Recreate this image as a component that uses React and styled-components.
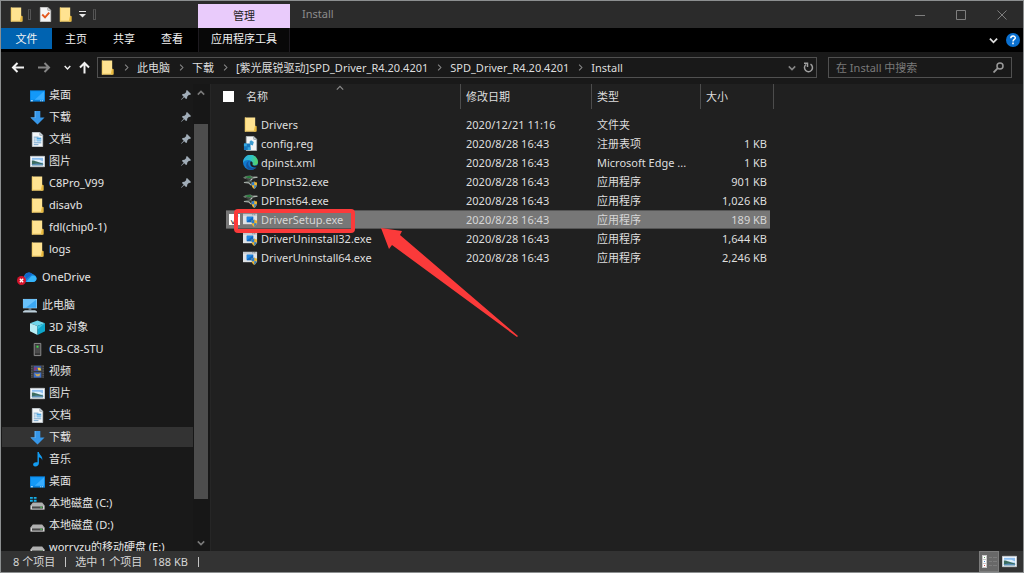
import React, { useState } from "react";
import styled, { createGlobalStyle } from "styled-components";

const GlobalStyle = createGlobalStyle`
  * {
    box-sizing: border-box;
  }
  body {
    margin: 0;
    background: #202020;
    color: #dedede;
    font-family: "Noto Sans", "Noto Sans CJK SC", sans-serif;
    font-size: 11px;
    line-height: 16px;
  }
  button, input {
    font: inherit;
    color: inherit;
    padding: 0;
    border: 0;
    background: none;
  }
  svg {
    display: block;
    flex: none;
  }
`

const Window = styled.div`
  display: flex;
  flex-direction: column;
  height: 100vh;
  border: 1px solid #8c8f90;
`
const TitleBar = styled.header`
  display: flex;
  flex: none;
  height: 27px;
  padding-right: 1px;
  background: #2b2b2b;
`
const QuickAccess = styled.div`
  display: flex;
  align-items: center;
  width: 197px;
  padding-left: 8px;
`
const QuickButton = styled.button`
  display: flex;
  align-items: center;
  justify-content: center;
  width: ${(props) => props.$width || 20}px;
  height: 20px;
`
const Divider = styled.span`
  width: 3px;
  height: 11px;
  margin: 0 5px;
  border: 1px solid #555;
  border-top-color: #444;
`
const ToolGroup = styled.div`
  width: 92px;
  margin-top: 3px;
  background: #e9cbfb;
  color: #222;
  text-align: center;
  line-height: 23px;
`
const Title = styled.h1`
  flex: 1;
  margin: 0;
  padding-left: 12px;
  color: #8c8c8c;
  font-size: 11px;
  font-weight: 400;
  line-height: 26px;
`
const WindowButton = styled.button`
  display: flex;
  align-items: center;
  justify-content: center;
  width: 41px;
  color: #7e7e7e;
`
const Ribbon = styled.nav`
  display: flex;
  flex: none;
  height: 24px;
  background: #000;
`
const Tab = styled.button`
  width: ${(props) => props.$width || 48}px;
  height: ${(props) => (props.$file ? 21 : 24)}px;
  padding-bottom: ${(props) => (props.$file ? 0 : 2)}px;
  margin-left: ${(props) => (props.$tools ? 2 : 0)}px;
  background: ${(props) => (props.$file ? "#0063b1" : props.$tools ? "#080808" : "transparent")};
  border-left: ${(props) => (props.$tools ? "1px solid #1d1a1f" : "0")};
  border-right: ${(props) => (props.$tools ? "1px solid #1d1a1f" : "0")};
  color: #f2f2f2;
`
const RibbonEnd = styled.div`
  display: flex;
  align-items: center;
  gap: 8px;
  margin-left: auto;
  padding-right: 3px;
`
const NavBar = styled.div`
  display: flex;
  flex: none;
  align-items: center;
  height: 32px;
  padding: 0 11px 1px 7px;
  background: #191919;
`
const NavButton = styled.button`
  display: flex;
  align-items: center;
  justify-content: center;
  width: ${(props) => props.$width}px;
  height: 20px;
  color: ${(props) => (props.$dim ? "#858585" : "#f2f2f2")};
`
const AddressBar = styled.div`
  display: flex;
  flex: 1;
  align-items: center;
  height: 21px;
  margin-right: 11px;
  padding-left: 2px;
  border: 1px solid #505050;
  white-space: nowrap;
`
const Crumb = styled.span`
  display: flex;
  align-items: center;
`
const CrumbArrow = styled.span`
  display: flex;
  justify-content: center;
  width: 22px;
  color: #8a8a8a;
`
const AddressEnd = styled.div`
  display: flex;
  margin-left: auto;
`
const SearchBox = styled.label`
  display: flex;
  align-items: center;
  width: 18%;
  min-width: 184px;
  height: 21px;
  padding: 0 7px;
  border: 1px solid #505050;
  color: #9a9a9a;
`
const SearchInput = styled.input`
  flex: 1;
  min-width: 0;
  outline: 0;
  &::placeholder {
    color: #7a7a7a;
    opacity: 1;
  }
`
const Body = styled.div`
  display: flex;
  flex: 1;
  min-height: 0;
`
const Sidebar = styled.aside`
  display: flex;
  flex: none;
  width: 210px;
  background: #191919;
  border-right: 1px solid #262626;
`
const Tree = styled.div`
  display: flex;
  flex: 1;
  flex-direction: column;
  gap: 8px;
  padding: 1px 0 0 1px;
  overflow: hidden;
`
const TreeGroup = styled.div`
  display: flex;
  flex-direction: column;
  flex: none;
  gap: 2px;
`
const TreeItem = styled.button`
  display: flex;
  flex: none;
  align-items: center;
  gap: ${(props) => (props.$root ? 5 : 4)}px;
  height: 20px;
  padding: 0 2px 0 ${(props) => (props.$root ? 20 : 28)}px;
  background: ${(props) => (props.$active ? "#333" : "transparent")};
  color: #e6e6e6;
  white-space: nowrap;
  text-align: left;
  &:hover {
    background: #2b2b2b;
  }
`
const PinSlot = styled.span`
  margin-left: auto;
`
const ScrollBar = styled.div`
  display: flex;
  flex-direction: column;
  width: 17px;
  padding: 0 2px 0 1px;
  background: #171717;
`
const ScrollButton = styled.button`
  display: flex;
  align-items: center;
  justify-content: center;
  height: 17px;
  color: #7a7a7a;
`
const ScrollTrack = styled.div`
  display: flex;
  flex: 1;
  flex-direction: column;
  &::before {
    content: "";
    flex: 23;
  }
  &::after {
    content: "";
    flex: 35;
  }
`
const Thumb = styled.div`
  flex: 376;
  background: #4d4d4d;
`
const Content = styled.main`
  position: relative;
  flex: 1;
  min-width: 0;
  padding-left: 11px;
  background: #202020;
`
const FileTable = styled.table`
  width: 552px;
  table-layout: fixed;
  border-collapse: separate;
  border-spacing: 0;
`
const Col = styled.col`
  width: ${(props) => props.$width}px;
`
const Th = styled.th`
  position: relative;
  height: 25px;
  padding: 0 0 0 5px;
  border-right: 1px solid #4c4c4c;
  font-weight: 400;
  text-align: left;
  color: #dedede;
  &:first-child {
    padding-left: 1px;
  }
`
const SortMark = styled.span`
  position: absolute;
  top: 0;
  left: 48%;
  color: #8a8a8a;
`
const Spacer = styled.tr`
  height: 6px;
`
const Row = styled.tr`
  height: 19px;
  color: ${(props) => (props.$selected ? "#d6d6d6" : "#dedede")};
`
const Td = styled.td`
  height: 19px;
  padding: 0 0 0 5px;
  overflow: hidden;
  white-space: nowrap;
  text-overflow: ellipsis;
  text-align: ${(props) => (props.$right ? "right" : "left")};
  background: ${(props) => (props.$selected ? "#777" : "transparent")};
  background-clip: padding-box;
  box-shadow: ${(props) => (props.$selected ? "inset 0 1px #555, inset 0 -1px #555" : "none")};
  &:first-child {
    border-left: 4px solid transparent;
    padding-left: 3px;
  }
  &:nth-child(3) {
    padding-right: 8px;
  }
  &:last-child {
    border-right: 4px solid transparent;
    padding-right: 3px;
  }
`
const NameCell = styled.div`
  display: flex;
  align-items: center;
  gap: 3px;
`
const HeadCell = styled.div`
  display: flex;
  align-items: center;
  gap: 12px;
`
const Check = styled.input.attrs({ type: "checkbox" })`
  appearance: none;
  flex: none;
  width: 11px;
  height: 11px;
  margin: 0;
  background: #fff;
  color: #222;
  opacity: ${(props) => (props.$hidden ? 0 : 1)};
  &:checked::before {
    content: "✓";
    display: block;
    font-size: 11px;
    line-height: 11px;
    text-align: center;
  }
`
const FileName = styled.span`
  display: flex;
  align-items: center;
  gap: 3px;
`
const Annotation = styled.svg`
  position: absolute;
  top: 0;
  left: 0;
  pointer-events: none;
`
const StatusBar = styled.footer`
  display: flex;
  flex: none;
  align-items: center;
  height: 21px;
  padding: 0 4px 0 12px;
  background: #333;
  color: #d6d6d6;
`
const StatusText = styled.span`
  margin-right: 10px;
`
const StatusLine = styled.span`
  width: 1px;
  height: 10px;
  margin-right: 9px;
  background: #c4c4c4;
`
const ViewButtons = styled.div`
  display: flex;
  align-self: stretch;
  margin-left: auto;
`
const ViewButton = styled.button`
  display: flex;
  align-items: center;
  justify-content: center;
  width: 20px;
  background: ${(props) => (props.$active ? "#686868" : "transparent")};
  border: 1px solid ${(props) => (props.$active ? "#7c7c7c" : "transparent")};
`

const Svg = ({ w = 15, h = 15, box = "0 0 16 16", children }) => (
  <svg width={w} height={h} viewBox={box} fill="none" aria-hidden="true">
    {children}
  </svg>
);

const Chevron = ({ dir = "down", size = 8, weight = 2 }) => {
  const paths = {
    down: "M1 3 L5 7 L9 3",
    up: "M1 7 L5 3 L9 7",
    right: "M3 1 L7 5 L3 9",
  };
  return (
    <Svg w={size} h={size} box="0 0 10 10">
      <path d={paths[dir]} stroke="currentColor" strokeWidth={weight} />
    </Svg>
  );
};

const FolderIcon = () => (
  <Svg>
    <path d="M2 .5h11v9l1 1v5H2z" fill="#ffe391" />
    <path d="M2 .5h1v15H2z" fill="#f5d06b" />
    <path d="M12.500 10.500l1-1.500 1 1v5.500h-3z" fill="#e9b93d" />
    <path d="M2 14.500h11v1H2z" fill="#edc75f" />
  </Svg>
);

const DesktopIcon = () => (
  <Svg>
    <path d="M0 2.500h16v12H0z" fill="#0a84e0" />
    <path d="M1 3.500h14v9H1z" fill="#1399f8" />
    <path d="M15 3.500v9H5z" fill="#39adff" />
    <path d="M1 13h2v1H1zM11 13h1v1h-1zM13 13h1v1h-1z" fill="#d9f0ff" />
  </Svg>
);

const DownloadIcon = () => (
  <Svg>
    <path d="M5 1h6v7h4.500L8 15.500.5 8H5z" fill="#3696e8" />
    <path d="M5 1h1v7.500H1.500L8 15 .5 8H5z" fill="#63b3f4" />
  </Svg>
);

const DocumentIcon = () => (
  <Svg>
    <path d="M2.500 .5h8l3 3v12h-11z" fill="#f3f6f8" stroke="#c3cbd0" />
    <path d="M10.500 .5v3h3" fill="#d8e1e7" stroke="#9ca8b0" />
    <path d="M4 5.500h5M4 7.500h2M4 9.500h2M4 11.500h8M4 13.500h5" stroke="#6b9fc9" />
    <path d="M7 6h5v4H7z" fill="#4ca3e0" />
    <path d="M7 8h5v1H7z" fill="#d5ecfa" />
  </Svg>
);

const PictureIcon = () => (
  <Svg>
    <path d="M.5 2.500h15v11H.5z" fill="#fff" stroke="#c6cdd2" />
    <path d="M2 4h12v8H2z" fill="#8dbff0" />
    <path d="M2 6h8l4 2v1H2z" fill="#e2f1fa" />
    <path d="M2 7c4 0 6 2 12 3v2H2z" fill="#3c6d60" />
    <path d="M2 11l5-1 7 1v1H2z" fill="#5b8fb8" />
  </Svg>
);

const PinIcon = () => (
  <Svg w={10} h={10} box="0 0 10 10">
    <path d="M6 0l4 4-1 1-1-.3L6.300 6.500 6 8.500 5 9 3.200 7.200.5 9.800 0 9.500 2.700 6.700 1 5l.6-1L3.500 3.800 5.300 2 5 1z" fill="#a1adb8" />
  </Svg>
);

const OneDriveIcon = () => (
  <Svg w={20} h={15} box="0 0 20 15">
    <path d="M7 8a5 5 0 0 1 8.500-4c2.500.5 4 2.500 4 4.500s-1.500 3.500-3.500 3.500H8z" fill="#1686dc" />
    <path d="M8 5a4.500 4.500 0 0 1 7.500-1L9 9z" fill="#1266c8" />
    <path d="M9 12l5.500-6c3-1 5 .5 5 2.500s-1.500 3.500-3.500 3.500z" fill="#35b5fa" />
    <circle cx="4.500" cy="10.500" r="4.500" fill="#d3142c" />
    <path d="M2.800 8.800l3.400 3.400M6.200 8.800l-3.400 3.400" stroke="#fff" strokeWidth="1.300" />
  </Svg>
);

const ComputerIcon = () => (
  <Svg>
    <path d="M1 1h15v10H1z" fill="#b5dcf3" />
    <path d="M1.500 1.500h14v9h-14z" fill="#3ba7f2" />
    <path d="M1.500 1.500h14L4 10.500H1.500z" fill="#69c2fb" />
    <path d="M7 11h3v1.500H7z" fill="#8299a8" />
    <path d="M3 13h11l2 1.500v1H1v-1z" fill="#bdd0dc" />
  </Svg>
);

const CubeIcon = () => (
  <Svg>
    <path d="M8 .5l8 3L8 6.500 0 3.500z" fill="#6fd6ea" />
    <path d="M0 3.500L8 6.500V16L0 12z" fill="#b8eef5" />
    <path d="M16 3.500L8 6.500V16l8-4z" fill="#0ea6cb" />
    <path d="M16 3.500L8 10V6.500z" fill="#3bc4e0" />
  </Svg>
);

const DeviceIcon = () => (
  <Svg>
    <path d="M4.500 1.500h7v13h-7z" fill="#343434" stroke="#929292" />
    <path d="M5.500 3h5v9h-5z" fill="#4b4b4b" />
    <path d="M7 4h2v2H7z" fill="#3fe04a" />
  </Svg>
);

const VideoIcon = () => (
  <Svg>
    <path d="M1 1h14v14H1z" fill="#3a3a3a" />
    <path d="M2 2v13M14 2v13" stroke="#777" strokeDasharray="1 1.500" />
    <path d="M4 2h8v5.500H4z" fill="#385ea9" />
    <path d="M4 9h8v5.500H4z" fill="#3f6fc8" />
    <path d="M5 3l3 1-2 3H4z" fill="#8d3a78" />
    <path d="M8 4h3l1 3H9z" fill="#efc435" />
    <path d="M5 10l3 1 3-1-1 3H7z" fill="#c9a75a" />
  </Svg>
);

const MusicIcon = () => (
  <Svg>
    <path d="M8 0h1.500c0 3 4.500 4 3.500 9-.3-2-1.500-3-3.500-3.500V12c0 2-1.500 3.500-4 3.500-3 0-3-4.500 1-4.500H8z" fill="#139cf2" />
  </Svg>
);

const DriveIcon = ({ system }) => (
  <Svg>
    <path d="M3 7h10l2.500 3H.5z" fill="#b0b0b0" />
    <path d="M.5 10h15v4.500H.5z" fill="#e2e2e2" />
    <path d="M2 11h12v2.500H2z" fill="#4a4a4a" />
    <path d="M11 11.500h2v1h-2z" fill="#48e254" />
    {system && <path d="M0 1h3v2H0zM4 1h3v2H4zM0 4h3v2H0zM4 4h3v2H4z" fill="#16aee8" />}
  </Svg>
);

const RegIcon = () => (
  <Svg>
    <path d="M3.500 .5h8l3 3v12h-11z" fill="#f4f4f4" stroke="#b0b6ba" />
    <path d="M11.500 .5v3h3" stroke="#8e979d" />
    <path d="M1 8h7v7H1z" fill="#1778bd" />
    <path d="M1 8h3v3H1zM5 12h3v3H5z" fill="#35a8e0" />
    <path d="M8.500 4.500l3 2-1 3.500-3-1-.5-3z" fill="#3c9bd0" />
  </Svg>
);

const EdgeIcon = () => (
  <Svg>
    <defs>
      <linearGradient id="edgeTop" x1="0" y1="4" x2="16" y2="8" gradientUnits="userSpaceOnUse">
        <stop stopColor="#2fa9e0" />
        <stop offset=".5" stopColor="#2fc3c5" />
        <stop offset="1" stopColor="#5bd55a" />
      </linearGradient>
    </defs>
    <circle cx="8" cy="8" r="8" fill="#1078cf" />
    <path d="M0 8a8 8 0 0 1 16-.5c0 3-2.500 4-5 3.500-1.500-.3-1-1-.8-2C10.500 5 3 3.500 0 8z" fill="url(#edgeTop)" />
    <path d="M5.500 9c0 4 4.500 6 9 4-4 5-12 3-11-3 .3-2 2-3.500 4-3.500C6.500 7 5.500 8 5.500 9z" fill="#1455a0" />
    <path d="M8 7c2 0 2.500 1 2.200 2.500-.4 2 2.800 2.700 5.800 1-.3 1-.8 1.700-1.500 2.500-4 1-8-1-6.500-6z" fill="#202020" />
  </Svg>
);

const Shield = () => (
  <>
    <path d="M9 9c1.200 0 2.300-.4 3-1 .7.600 1.800 1 3 1 0 3.500-.8 5.500-3 7-2.200-1.500-3-3.500-3-7z" fill="#f0b62e" />
    <path d="M9 9c1.200 0 2.300-.4 3-1v4H9.400zM12 12h2.600c-.4 1.700-1.200 3-2.600 4z" fill="#2b7dd0" />
  </>
);

const DpInstIcon = () => (
  <Svg>
    <path d="M0 4l3-2 5-.5 3 1.500h4v1l-4 1-5 1-4-1z" fill="#6f7a72" />
    <path d="M2 3l5-1 3 1.500-4 1z" fill="#23803b" />
    <path d="M3 5l4 .500 3-.5" stroke="#2b332d" />
    <path d="M11 3.500h4.500M10 5l-3 3" stroke="#c3c9c5" strokeWidth="1.200" />
    <path d="M1 8.500l6-2 3 1.500-4 1.500z" fill="#4f5952" />
    <path d="M1 9l5 .500 3 2.500" stroke="#a9b1ac" strokeWidth="1.200" />
    <Shield />
  </Svg>
);

const SetupIcon = () => (
  <Svg>
    <path d="M0 2h15v11H0z" fill="#dfe3e6" />
    <path d="M0 2h15v2H0z" fill="#c4cacf" />
    <path d="M10 2.500h1v1h-1zM12 2.500h1v1h-1z" fill="#717a82" />
    <path d="M4 5h7v6H4z" fill="#1268c0" />
    <path d="M4 5h7l-7 5z" fill="#2088e2" />
    <Shield />
  </Svg>
);

const TaskIcon = () => (
  <Svg>
    <path d="M2.500 .5h8l3 3v12h-11z" fill="#f5f5f5" stroke="#c9c9c9" />
    <path d="M10.500 .5v3h3" stroke="#999" />
    <path d="M4.500 8l3 3 4.500-5" stroke="#e2571e" strokeWidth="2" />
  </Svg>
);

const Arrow = ({ dir }) => (
  <Svg w={13} h={13} box="0 0 13 13">
    <path
      d={{
        left: "M13 6.500H2M6.500 2L2 6.500 6.500 11",
        right: "M0 6.500h11M6.500 2L11 6.500 6.500 11",
        up: "M6.500 12.500V2M2 6.500L6.500 2 11 6.500",
      }[dir]}
      stroke="currentColor"
      strokeWidth="2"
    />
  </Svg>
);

const DetailsIcon = () => (
  <Svg w={15} h={13} box="0 0 15 13">
    <path d="M0 0h5v13H0z" fill="#c8c8c8" />
    <path d="M1 1h3v3H1zM1 5h3v3H1zM1 9h3v3H1z" fill="#fff" />
    <path d="M2 2h1v1H2z" fill="#5b9e5b" />
    <path d="M2 6h1v1H2z" fill="#4d8fd6" />
    <path d="M2 10h1v1H2z" fill="#d64d4d" />
    <path d="M7 2.500h3M11 2.500h4M7 6.500h3M11 6.500h4M7 10.500h3M11 10.500h4" stroke="#7c7c7c" />
  </Svg>
);

const quickItems = [
  { name: "桌面", icon: DesktopIcon, pinned: true },
  { name: "下载", icon: DownloadIcon, pinned: true },
  { name: "文档", icon: DocumentIcon, pinned: true },
  { name: "图片", icon: PictureIcon, pinned: true },
  { name: "C8Pro_V99", icon: FolderIcon, pinned: true },
  { name: "disavb", icon: FolderIcon },
  { name: "fdl(chip0-1)", icon: FolderIcon },
  { name: "logs", icon: FolderIcon },
];

const computerItems = [
  { name: "此电脑", icon: ComputerIcon, root: true },
  { name: "3D 对象", icon: CubeIcon },
  { name: "CB-C8-STU", icon: DeviceIcon },
  { name: "视频", icon: VideoIcon },
  { name: "图片", icon: PictureIcon },
  { name: "文档", icon: DocumentIcon },
  { name: "下载", icon: DownloadIcon, active: true },
  { name: "音乐", icon: MusicIcon },
  { name: "桌面", icon: DesktopIcon },
  { name: "本地磁盘 (C:)", icon: DriveIcon, system: true },
  { name: "本地磁盘 (D:)", icon: DriveIcon },
  { name: "worryzu的移动硬盘 (E:)", icon: DriveIcon },
];

const files = [
  { name: "Drivers", date: "2020/12/21 11:16", type: "文件夹", size: "", icon: FolderIcon },
  { name: "config.reg", date: "2020/8/28 16:43", type: "注册表项", size: "1 KB", icon: RegIcon },
  { name: "dpinst.xml", date: "2020/8/28 16:43", type: "Microsoft Edge ...", size: "1 KB", icon: EdgeIcon },
  { name: "DPInst32.exe", date: "2020/8/28 16:43", type: "应用程序", size: "901 KB", icon: DpInstIcon },
  { name: "DPInst64.exe", date: "2020/8/28 16:43", type: "应用程序", size: "1,026 KB", icon: DpInstIcon },
  { name: "DriverSetup.exe", date: "2020/8/28 16:43", type: "应用程序", size: "189 KB", icon: SetupIcon },
  { name: "DriverUninstall32.exe", date: "2020/8/28 16:43", type: "应用程序", size: "1,644 KB", icon: SetupIcon },
  { name: "DriverUninstall64.exe", date: "2020/8/28 16:43", type: "应用程序", size: "2,246 KB", icon: SetupIcon },
];

const crumbs = ["此电脑", "下载", "[紫光展锐驱动]SPD_Driver_R4.20.4201", "SPD_Driver_R4.20.4201", "Install"];

const TreeList = ({ items }) => (
  <TreeGroup>
    {items.map(({ name, icon: Icon, pinned, active, root, system }) => (
      <TreeItem key={name} $active={active} $root={root}>
        <Icon system={system} />
        {name}
        {pinned && <PinSlot><PinIcon /></PinSlot>}
      </TreeItem>
    ))}
  </TreeGroup>
);

const OneDriveItem = styled(TreeItem)`
  gap: 5px;
  padding-left: 15px;
`

const App = () => {
  const [selected, setSelected] = useState("DriverSetup.exe");
  const [query, setQuery] = useState("");

  return (
    <Window>
      <GlobalStyle />
      <TitleBar>
        <QuickAccess>
          <QuickButton $width={14} aria-label="Explorer"><FolderIcon /></QuickButton>
          <Divider />
          <QuickButton $width={18} aria-label="属性"><TaskIcon /></QuickButton>
          <QuickButton $width={22} aria-label="新建文件夹"><FolderIcon /></QuickButton>
          <QuickButton $width={12} aria-label="自定义">
            <Svg w={7} h={7} box="0 0 7 7">
              <path d="M0 .5h7" stroke="#e8e8e8" />
              <path d="M0 3h7L3.500 6.500z" fill="#e8e8e8" />
            </Svg>
          </QuickButton>
          <Divider />
        </QuickAccess>
        <ToolGroup>管理</ToolGroup>
        <Title>Install</Title>
        <WindowButton aria-label="最小化">
          <Svg w={10} h={10} box="0 0 10 10"><path d="M0 5.500h10" stroke="currentColor" /></Svg>
        </WindowButton>
        <WindowButton aria-label="最大化">
          <Svg w={10} h={10} box="0 0 10 10"><path d="M.5 .5h9v9h-9z" stroke="currentColor" /></Svg>
        </WindowButton>
        <WindowButton aria-label="关闭">
          <Svg w={10} h={10} box="0 0 10 10"><path d="M.5 .5l9 9M9.500 .5l-9 9" stroke="currentColor" /></Svg>
        </WindowButton>
      </TitleBar>

      <Ribbon>
        <Tab $file $width={51}>文件</Tab>
        <Tab>主页</Tab>
        <Tab>共享</Tab>
        <Tab>查看</Tab>
        <Tab $tools $width={92}>应用程序工具</Tab>
        <RibbonEnd>
          <QuickButton $width={10} aria-label="展开功能区"><Chevron size={9} /></QuickButton>
          <QuickButton $width={14} aria-label="帮助">
            <Svg w={14} h={14} box="0 0 14 14">
              <circle cx="7" cy="7" r="7" fill="#0a70d0" />
              <path d="M4.800 5.300c0-3 4.500-3 4.500-.3C9.300 6.500 7 6.500 7 8.500" stroke="#fff" strokeWidth="1.500" />
              <path d="M6.200 9.600h1.600v1.600H6.200z" fill="#fff" />
            </Svg>
          </QuickButton>
        </RibbonEnd>
      </Ribbon>

      <NavBar>
        <NavButton $width={18} aria-label="后退"><Arrow dir="left" /></NavButton>
        <NavButton $width={36} $dim aria-label="前进"><Arrow dir="right" /></NavButton>
        <NavButton $width={10} aria-label="最近"><Chevron size={7} /></NavButton>
        <NavButton $width={25} aria-label="向上"><Arrow dir="up" /></NavButton>
        <AddressBar>
          <FolderIcon />
          {crumbs.map((crumb) => (
            <Crumb key={crumb}>
              <CrumbArrow><Chevron dir="right" size={7} weight={1.5} /></CrumbArrow>
              <button>{crumb}</button>
            </Crumb>
          ))}
          <AddressEnd>
            <NavButton $width={16} $dim aria-label="历史"><Chevron size={8} /></NavButton>
            <NavButton $width={16} $dim aria-label="刷新">
              <Svg w={11} h={11} box="0 0 11 11">
                <path d="M7.500 2.200A4 4 0 1 1 3 2.500M1 1.200h3.500V5" stroke="#a0a0a0" strokeWidth="1.500" />
              </Svg>
            </NavButton>
          </AddressEnd>
        </AddressBar>
        <SearchBox>
          <SearchInput
            aria-label="搜索"
            placeholder="在 Install 中搜索"
            value={query}
            onChange={(e) => setQuery(e.target.value)}
          />
          <Svg w={11} h={11} box="0 0 11 11">
            <circle cx="7" cy="4" r="3" stroke="currentColor" strokeWidth="1.500" />
            <path d="M4.800 6.200L.5 10.500" stroke="currentColor" strokeWidth="1.800" />
          </Svg>
        </SearchBox>
      </NavBar>

      <Body>
        <Sidebar>
          <Tree>
            <TreeList items={quickItems} />
            <OneDriveItem><OneDriveIcon />OneDrive</OneDriveItem>
            <TreeList items={computerItems} />
          </Tree>
          <ScrollBar>
            <ScrollButton aria-label="向上滚动"><Chevron dir="up" /></ScrollButton>
            <ScrollTrack><Thumb /></ScrollTrack>
            <ScrollButton aria-label="向下滚动"><Chevron /></ScrollButton>
          </ScrollBar>
        </Sidebar>

        <Content>
          <FileTable>
            <colgroup>
              <Col $width={239} />
              <Col $width={131} />
              <Col $width={109} />
              <Col $width={73} />
            </colgroup>
            <thead>
              <tr>
                <Th>
                  <HeadCell><Check aria-label="全选" />名称</HeadCell>
                  <SortMark><Chevron dir="up" weight={1.5} /></SortMark>
                </Th>
                <Th>修改日期</Th>
                <Th>类型</Th>
                <Th>大小</Th>
              </tr>
            </thead>
            <tbody>
              <Spacer />
              {files.map(({ name, date, type, size, icon: Icon }) => {
                const on = name === selected;
                return (
                  <Row key={name} $selected={on} onClick={() => setSelected(name)}>
                    <Td $selected={on}>
                      <NameCell>
                        <Check aria-label={name} checked={on} readOnly $hidden={!on} />
                        <FileName><Icon />{name}</FileName>
                      </NameCell>
                    </Td>
                    <Td $selected={on}>{date}</Td>
                    <Td $selected={on}>{type}</Td>
                    <Td $selected={on} $right>{size}</Td>
                  </Row>
                );
              })}
            </tbody>
          </FileTable>
          <Annotation width="320" height="260" viewBox="0 0 320 260" fill="none" aria-hidden="true">
            <rect x="25" y="127" width="117" height="20" rx="2" stroke="#fb3a3a" strokeWidth="4" />
            <path d="M170 144l21 3-2 4 118 101-1 1-125-92-3 4z" fill="#fb3a3a" />
          </Annotation>
        </Content>
      </Body>

      <StatusBar>
        <StatusText>8 个项目</StatusText>
        <StatusLine />
        <StatusText>选中 1 个项目</StatusText>
        <StatusText>188 KB</StatusText>
        <StatusLine />
        <ViewButtons>
          <ViewButton $active aria-label="详细信息"><DetailsIcon /></ViewButton>
          <ViewButton aria-label="大图标"><PictureIcon /></ViewButton>
        </ViewButtons>
      </StatusBar>
    </Window>
  );
};

export default App;
